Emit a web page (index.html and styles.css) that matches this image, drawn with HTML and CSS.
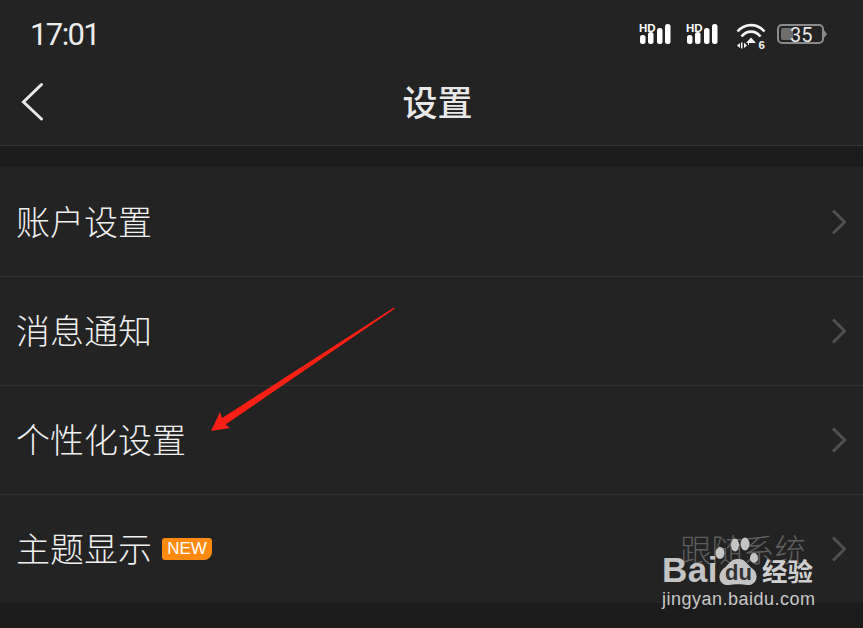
FILE: index.html
```html
<!DOCTYPE html>
<html lang="zh">
<head>
<meta charset="utf-8">
<title>设置</title>
<link rel="stylesheet" href="styles.css">
</head>
<body>
<div class="screen">
  <header class="status">
    <span class="time">17:01</span>
    <div class="status-icons">
      <svg class="sig" width="33" height="24" viewBox="0 0 33 24"><text x="0" y="10.500" class="hd">HD</text><rect x="1" y="14" width="5.500" height="9" rx="2.500"/><rect x="9" y="11" width="5.500" height="12" rx="2.500"/><rect x="18" y="7" width="5.500" height="16" rx="2.500"/><rect x="26" y="3" width="5.500" height="20" rx="2.500"/></svg>
      <svg class="sig" width="33" height="24" viewBox="0 0 33 24"><text x="0" y="10.500" class="hd">HD</text><rect x="1" y="14" width="5.500" height="9" rx="2.500"/><rect x="9" y="11" width="5.500" height="12" rx="2.500"/><rect x="18" y="7" width="5.500" height="16" rx="2.500"/><rect x="26" y="3" width="5.500" height="20" rx="2.500"/></svg>
      <svg class="wifi" width="31" height="31" viewBox="0 0 31 31"><path d="M1.500 10.500C9 2 21 2 28.500 10.500" fill="none" stroke="#f4f4f4" stroke-width="2.600"/><path d="M5.500 15.500C11 9 19 9 24.500 15.500" fill="none" stroke="#f4f4f4" stroke-width="2.600"/><path d="M10 22L15 16.500L20 22Z" fill="#f4f4f4"/><path d="M1 24.500l3-2.500v5zM5 21.500h1.500v6H5zM8 21.500l3 3-3 2.500zM12 22h1v2h-1z" fill="#f4f4f4"/><text x="22.500" y="28" class="six">6</text></svg>
      <div class="battery"><div class="level"></div><span class="num">35</span></div>
      <div class="nub"></div>
    </div>
  </header>
  <nav class="nav">
    <svg class="back" width="24" height="40" viewBox="0 0 24 40"><path d="M22.500 3.500L4.500 21L22.500 38" fill="none" stroke="#e8e8e8" stroke-width="3" stroke-linecap="round"/></svg>
    <h1 class="title">设置</h1>
  </nav>
  <main class="list">
    <div class="row"><span class="label">账户设置</span><svg class="chev" width="16" height="26" viewBox="0 0 16 26"><path d="M2 1.500L13.500 13L2 24.500" fill="none" stroke="#505050" stroke-width="3"/></svg></div>
    <div class="row"><span class="label">消息通知</span><svg class="chev" width="16" height="26" viewBox="0 0 16 26"><path d="M2 1.500L13.500 13L2 24.500" fill="none" stroke="#505050" stroke-width="3"/></svg></div>
    <div class="row"><span class="label">个性化设置</span><svg class="chev" width="16" height="26" viewBox="0 0 16 26"><path d="M2 1.500L13.500 13L2 24.500" fill="none" stroke="#505050" stroke-width="3"/></svg></div>
    <div class="row last"><span class="label">主题显示</span><span class="badge">NEW</span><span class="value">跟随系统</span><svg class="chev" width="16" height="26" viewBox="0 0 16 26"><path d="M2 1.500L13.500 13L2 24.500" fill="none" stroke="#505050" stroke-width="3"/></svg></div>
  </main>
  <svg class="arrow" width="863" height="628" viewBox="0 0 863 628"><path d="M395 308.500L225.500 424.500L230 428L211 431L220 412L222 418L394 307.500Z" fill="#fc1f14"/></svg>
  <div class="mark">
    <div class="mark-top">
      <span class="bai">Bai</span>
      <span class="paw">
        <svg width="46" height="54" viewBox="0 0 46 54"><g fill="#cdcdcd"><ellipse cx="5" cy="16" rx="4.500" ry="6"/><ellipse cx="20" cy="8" rx="4" ry="6.500"/><ellipse cx="30" cy="7" rx="4.500" ry="6.500"/><ellipse cx="39" cy="21" rx="4" ry="5"/><path d="M23 22C31 22 31 27 38 32C45 38 41 49 32 48C27 47 19 47 14 48C5 49 1 39 8 32C15 27 15 22 23 22Z"/></g></svg>
        <span class="du">du</span>
      </span>
      <span class="jy">经验</span>
    </div>
    <div class="url">jingyan.baidu.com</div>
  </div>
</div>
</body>
</html>
```
FILE: styles.css
```css
* { box-sizing: border-box; }
html, body { margin: 0; padding: 0; }
body { background: #1c1c1c; font-family: "Noto Sans CJK SC", "Liberation Sans", sans-serif; }
.screen { position: relative; width: 863px; height: 628px; overflow: hidden; background: #1c1c1c; }
.status { height: 70px; background: #232323; display: flex; align-items: flex-start; padding: 17px 36px 0 30px; justify-content: space-between; }
.time { font: 31px/36px "Roboto", sans-serif; color: #ececec; letter-spacing: -1.600px; }
.status-icons { display: flex; align-items: flex-start; margin-top: 4px; }
.sig { fill: #fff; margin-right: 14px; }
.hd { font: bold 11.500px "Liberation Sans", sans-serif; fill: #fff; }
.six { font: bold 11.500px "Liberation Sans", sans-serif; fill: #f4f4f4; }
.wifi { margin-right: 10px; margin-left: 3px; }
.battery { position: relative; width: 47px; height: 20px; margin-top: 3px; border: 2px solid #8a8a8a; border-radius: 5px; padding: 2px; }
.level { width: 12px; height: 12px; background: #6e6e6e; border-radius: 2px 0 0 2px; }
.num { position: absolute; left: 11px; top: -4px; font: 20px/26px "Roboto", sans-serif; color: #e8e8e8; }
.nub { width: 0; height: 0; margin-top: 9px; border-left: 3px solid #8a8a8a; border-top: 4px solid transparent; border-bottom: 4px solid transparent; }
.nav { position: relative; height: 76px; background: #232323; border-bottom: 1px solid #343434; display: flex; justify-content: center; align-items: flex-start; padding-left: 12px; }
.back { position: absolute; left: 19px; top: 11px; }
.title { margin: 8px 0 0; font-size: 35px; line-height: 46px; font-weight: 500; color: #e8e8e8; }
.list { margin-top: 21px; display: flex; flex-direction: column; }
.row { height: 109px; background: #232323; border-bottom: 1px solid #323232; display: flex; align-items: center; padding: 0 16px 0 16px; position: relative; }
.row:first-child { height: 110px; }
.row.last { border-bottom: none; height: 108px; }
.label { font-size: 34px; line-height: 44px; color: #f0f0f0; margin-top: -2px; font-weight: 300; }
.chev { margin-left: auto; }
.badge { margin-left: 10px; width: 50px; height: 22px; background: #ff8a0f; border-radius: 3px 3px 8px 3px; color: #fff; font: 17px/22px "Liberation Sans", sans-serif; text-align: center; }
.value { margin-left: auto; font-size: 31.500px; line-height: 40px; color: #5e5e5e; font-weight: 300; margin-top: -2px; }
.row.last .chev { margin-left: 25px; }
.arrow { position: absolute; left: 0; top: 0; }
.mark { position: absolute; left: 662px; top: 537px; width: 160px; display: flex; flex-direction: column; }
.mark-top { display: flex; align-items: flex-start; height: 50px; }
.bai { font: bold 35px/40px "Liberation Sans", sans-serif; color: #c4c4c4; margin-top: 13px; letter-spacing: 0.500px; width: 53px; }
.paw { position: relative; width: 46px; height: 54px; flex: none; opacity: .95; }
.paw svg { display: block; }
.du { position: absolute; left: 10px; top: 25px; font: bold 22px/22px "Liberation Sans", sans-serif; color: #333; }
.jy { font-size: 25.500px; line-height: 32px; font-weight: 700; color: #d0d0d0; margin-top: 17px; margin-left: 1px; white-space: nowrap; }
.url { font: 18px/22px "Liberation Sans", sans-serif; color: #c8c8c8; letter-spacing: 0.500px; margin-top: 1px; white-space: nowrap; }
```
